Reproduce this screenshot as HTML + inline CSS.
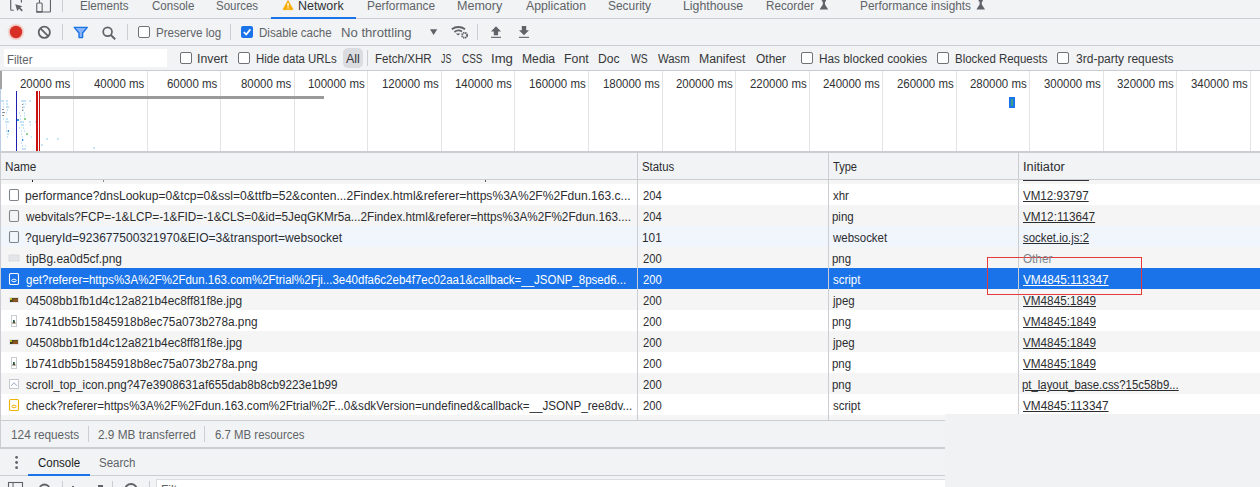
<!DOCTYPE html>
<html><head><meta charset="utf-8">
<style>
*{margin:0;padding:0;box-sizing:border-box}
html,body{width:1260px;height:487px;overflow:hidden;background:#f1f3f4;font-family:"Liberation Sans",sans-serif;font-size:12px;color:#202124;position:relative}
.a{position:absolute;white-space:nowrap;line-height:14px;transform-origin:0 0}
.hl{position:absolute;height:1px;background:#cacdd1}
.vl{position:absolute;width:1px;background:#cacdd1}
.cb{position:absolute;width:12px;height:12px;border:1px solid #6e7277;border-radius:2px;background:#fff}
.gl{position:absolute;top:71px;height:80px;width:1px;background:#e3e3e3}
.bg{position:absolute}
</style></head><body>

<!-- TAB BAR -->
<div class="hl" style="left:0;top:18px;width:1260px"></div>
<div class="bg" style="left:271px;top:17px;width:85px;height:2px;background:#1a73e8"></div>
<svg class="bg" style="left:0;top:0" width="1000" height="18">
 <!-- inspect icon -->
 <path d="M10.7 -1 V9.2 Q10.7 10.2 11.7 10.2 H13.8" fill="none" stroke="#5f6368" stroke-width="1.15"/>
 <path d="M21.4 -1 V2.6" fill="none" stroke="#5f6368" stroke-width="1.15"/>
 <path d="M15.2 4.3 L22.4 6.2 L20.2 7.6 L22.8 10.3 L21.7 11.4 L19.1 8.8 L17.3 11 Z" fill="#5f6368"/>
 <!-- device icon -->
 <rect x="36.75" y="2.95" width="5.4" height="9.1" rx="1" fill="none" stroke="#5f6368" stroke-width="1.1"/>
 <rect x="36.2" y="11.1" width="6.5" height="1.5" fill="#5f6368"/>
 <path d="M39.5 -1 V2.9" fill="none" stroke="#5f6368" stroke-width="1.1"/>
 <path d="M42.6 12.05 H49.9 Q50.45 12.05 50.45 11.5 V-1" fill="none" stroke="#5f6368" stroke-width="1.1"/>
 <rect x="62" y="0" width="1" height="12" fill="#cacdd1"/>
 <!-- warning -->
 <path d="M288 0.6 L293 9.6 H283 Z" fill="#f9ab00" stroke="#f9ab00" stroke-width="0.8" stroke-linejoin="round"/>
 <rect x="287.4" y="3" width="1.3" height="3.4" fill="#fff"/>
 <rect x="287.4" y="7.2" width="1.3" height="1.3" fill="#fff"/>
 <!-- flask icons -->
 <path d="M819.6 9.4 H828.2 L825 4.6 V1.6 H826 V0 H821.8 V1.6 H822.8 V4.6 Z" fill="#5f6368"/>
 <path d="M976.4 9.4 H985 L981.8 4.6 V1.6 H982.8 V0 H978.6 V1.6 H979.6 V4.6 Z" fill="#5f6368"/>
</svg>

<!-- TOOLBAR -->
<div class="hl" style="left:0;top:45px;width:1260px"></div>
<svg class="bg" style="left:0;top:19px" width="540" height="25" viewBox="0 19 540 25">
 <circle cx="16" cy="32" r="8.4" fill="#f3d6d3" opacity="0.75"/><circle cx="16" cy="32" r="7.4" fill="#f0c4bf" opacity="0.8"/>
 <circle cx="16" cy="32" r="6.2" fill="#d93025"/>
 <circle cx="44.3" cy="32.3" r="5.6" fill="none" stroke="#5f6368" stroke-width="1.8"/>
 <line x1="40.4" y1="28.4" x2="48.2" y2="36.2" stroke="#5f6368" stroke-width="1.8"/>
 <rect x="62" y="24" width="1" height="16" fill="#cacdd1"/>
 <path d="M74.3 27.4 H87.3 L82.6 33 V37.6 H79 V33 Z" fill="#8ab4f8" stroke="#1a73e8" stroke-width="1.4" stroke-linejoin="round"/>
 <circle cx="107.6" cy="31.8" r="4.4" fill="none" stroke="#5f6368" stroke-width="1.7"/>
 <line x1="110.8" y1="35" x2="115.2" y2="39.2" stroke="#5f6368" stroke-width="1.9"/>
 <rect x="127" y="24" width="1" height="16" fill="#cacdd1"/>
 <rect x="230" y="24" width="1" height="16" fill="#cacdd1"/>
 <path d="M430 29.2 H437.2 L433.6 35 Z" fill="#5f6368"/>
 <path d="M451.8 29.2 A11 11 0 0 1 465 29.2" fill="none" stroke="#5f6368" stroke-width="1.8"/>
 <path d="M454.4 32 A6.5 6.5 0 0 1 462 31.4" fill="none" stroke="#5f6368" stroke-width="1.8"/>
 <path d="M455.8 33.4 L458.2 35.6 L460.4 33.4 Z" fill="#5f6368"/>
 <circle cx="464.6" cy="35.3" r="2.5" fill="none" stroke="#5f6368" stroke-width="1.9" stroke-dasharray="1.4 0.6"/>
 <rect x="477" y="24" width="1" height="16" fill="#cacdd1"/>
 <path d="M496 26.3 L501 31.4 H498.1 V35.3 H493.8 V31.4 H491 Z" fill="#5f6368"/>
 <rect x="491" y="36.8" width="10" height="1.1" fill="#5f6368"/>
 <path d="M521.8 26 H526.2 V30.2 H529 L524 35.3 L519 30.2 H521.8 Z" fill="#5f6368"/>
 <rect x="519" y="36.8" width="10" height="1.1" fill="#5f6368"/>
 <rect x="241" y="26" width="12" height="12" rx="2" fill="#1a73e8"/>
 <path d="M243.8 32 L246.2 34.5 L250.4 29.4" fill="none" stroke="#fff" stroke-width="1.7"/>
</svg>
<div class="cb" style="left:138px;top:26px"></div>

<!-- FILTER BAR -->
<div class="bg" style="left:4px;top:49px;width:163px;height:18px;background:#fff"></div>
<div class="cb" style="left:180px;top:52px"></div>
<div class="cb" style="left:238px;top:52px"></div>
<div class="bg" style="left:343px;top:48px;width:20px;height:20px;border-radius:5px;background:#dadce0"></div>
<div class="vl" style="left:367px;top:50px;height:16px"></div>
<div class="cb" style="left:801px;top:52px"></div>
<div class="cb" style="left:937px;top:52px"></div>
<div class="cb" style="left:1057px;top:52px"></div>
<div class="hl" style="left:0;top:70px;width:1260px"></div>

<!-- TIMELINE -->
<div class="bg" style="left:0;top:71px;width:1260px;height:80px;background:#fff"></div>
<div class="gl" style="left:73px"></div><div class="gl" style="left:147px"></div><div class="gl" style="left:220px"></div><div class="gl" style="left:294px"></div><div class="gl" style="left:367px"></div><div class="gl" style="left:441px"></div><div class="gl" style="left:514px"></div><div class="gl" style="left:588px"></div><div class="gl" style="left:662px"></div><div class="gl" style="left:735px"></div><div class="gl" style="left:809px"></div><div class="gl" style="left:882px"></div><div class="gl" style="left:956px"></div><div class="gl" style="left:1029px"></div><div class="gl" style="left:1103px"></div><div class="gl" style="left:1176px"></div><div class="gl" style="left:1250px"></div>
<div class="bg" style="left:0;top:71px;width:2px;height:18px;background:#a3a3a3"></div>
<div class="bg" style="left:0;top:89px;width:1px;height:62px;background:#bccde8"></div>
<svg class="bg" style="left:0;top:71px" width="1260" height="80" viewBox="0 71 1260 80">
 <rect x="39" y="96" width="285" height="3" fill="#9a9a9a"/>
 <rect x="16" y="91" width="1" height="60" fill="#2020b0"/>
 <rect x="36" y="91" width="2" height="60" fill="#cc1111"/>
 <rect x="39" y="91" width="1" height="60" fill="#cc1111"/>
 <rect x="1009" y="97" width="6" height="11" fill="#1a73e8"/>
 <rect x="1011" y="99" width="2" height="7" fill="#3aa08a"/>
 <g fill="#a9d6f5" opacity="0.65">
  <rect x="1" y="100" width="3" height="2"/><rect x="6" y="100" width="2" height="2"/><rect x="21" y="100" width="5" height="2"/><rect x="29" y="100" width="2" height="2"/>
  <rect x="3" y="103" width="1" height="2"/><rect x="6" y="103" width="2" height="2"/><rect x="23" y="103" width="1" height="2"/><rect x="25" y="103" width="1" height="2"/>
  <rect x="3" y="106" width="1" height="2"/><rect x="6" y="106" width="3" height="2"/><rect x="23" y="106" width="2" height="2"/>
  <rect x="7" y="109" width="1" height="2"/><rect x="22" y="109" width="2" height="2"/>
  <rect x="6" y="112" width="1" height="2"/><rect x="19" y="112" width="1" height="2"/><rect x="24" y="112" width="1" height="2"/>
  <rect x="20" y="115" width="1" height="2"/><rect x="24" y="115" width="1" height="2"/>
  <rect x="3" y="118" width="1" height="2"/><rect x="6" y="118" width="2" height="2"/><rect x="20" y="118" width="1" height="2"/>
  <rect x="5" y="121" width="4" height="2"/><rect x="20" y="121" width="4" height="2"/><rect x="29" y="121" width="2" height="2"/><rect x="35" y="121" width="1" height="2"/>
  <rect x="6" y="124" width="1" height="2"/><rect x="21" y="124" width="3" height="2"/><rect x="30" y="124" width="1" height="2"/>
  <rect x="6" y="127" width="1" height="2"/><rect x="19" y="127" width="1" height="2"/><rect x="23" y="127" width="1" height="2"/>
  <rect x="6" y="130" width="2" height="2"/><rect x="21" y="130" width="1" height="2"/><rect x="24" y="130" width="1" height="2"/>
  <rect x="7" y="133" width="2" height="2"/><rect x="21" y="133" width="1" height="2"/>
  <rect x="7" y="136" width="1" height="2"/><rect x="22" y="136" width="1" height="2"/><rect x="31" y="136" width="1" height="2"/>
  <rect x="22" y="139" width="2" height="2"/><rect x="46" y="138" width="2" height="2"/><rect x="57" y="138" width="2" height="2"/>
  <rect x="21" y="142" width="1" height="2"/><rect x="22" y="145" width="1" height="2"/><rect x="25" y="145" width="1" height="2"/><rect x="41" y="144" width="2" height="2"/>
  <rect x="22" y="148" width="4" height="2"/><rect x="93" y="147" width="2" height="2"/>
 </g>
 <g fill="#8a8a8a">
  <rect x="2" y="109" width="2" height="1"/><rect x="2" y="112" width="3" height="1"/><rect x="2" y="115" width="2" height="1"/>
  <rect x="22" y="104" width="1" height="1"/><rect x="22" y="107" width="1" height="1"/><rect x="22" y="110" width="1" height="1"/>
 </g>
 <g fill="#3b8fe0"><rect x="17" y="119" width="2" height="2"/><rect x="8" y="130" width="1" height="2"/><rect x="22" y="139" width="1" height="2"/></g>
 <g fill="#8fd08f"><rect x="24" y="118" width="2" height="2"/><rect x="26" y="133" width="2" height="2"/></g>
</svg>
<div class="bg" style="left:0;top:151px;width:1260px;height:2px;background:#cacdd1"></div>

<!-- TABLE -->
<div class="bg" style="left:0;top:153px;width:1260px;height:26px;background:#f1f3f4"></div>
<div class="hl" style="left:0;top:179px;width:1260px"></div>
<div class="bg" style="left:0;top:180px;width:1260px;height:240px;background:#fff"></div>
<div class="bg" style="left:0;top:180px;width:1260px;height:4px;background:#f5f5f5"></div>
<div class="bg" style="left:0;top:205px;width:1260px;height:21px;background:#f5f5f5"></div>
<div class="bg" style="left:0;top:226px;width:1260px;height:21px;background:#f1f5fc"></div>
<div class="bg" style="left:0;top:247px;width:1260px;height:21px;background:#f5f5f5"></div>
<div class="bg" style="left:0;top:289px;width:1260px;height:21px;background:#f5f5f5"></div>
<div class="bg" style="left:0;top:331px;width:1260px;height:21px;background:#f5f5f5"></div>
<div class="bg" style="left:0;top:373px;width:1260px;height:21px;background:#f5f5f5"></div>
<div class="bg" style="left:0;top:415px;width:1260px;height:5px;background:#f5f5f5"></div>
<div class="bg" style="left:0;top:268px;width:1260px;height:21px;background:#1a73e8"></div>
<div class="vl" style="left:637px;top:153px;height:267px"></div>
<div class="vl" style="left:828px;top:153px;height:267px"></div>
<div class="vl" style="left:1018px;top:153px;height:267px"></div>
<div class="bg" style="left:0;top:153px;width:1px;height:295px;background:#cacdd1"></div>
<!-- partial row artifacts -->
<div class="bg" style="left:32px;top:180px;width:1px;height:2px;background:#202124"></div>
<div class="bg" style="left:103px;top:180px;width:1px;height:2px;background:#888"></div>
<div class="bg" style="left:485px;top:180px;width:1px;height:2px;background:#555"></div>
<div class="bg" style="left:1023px;top:180px;width:66px;height:1px;background:#303134"></div>
<!-- row icons -->
<svg class="bg" style="left:0;top:180px" width="24" height="240" viewBox="0 180 24 240">
 <g fill="none" stroke="#80868b" stroke-width="1.1">
  <rect x="9.5" y="189.5" width="9" height="11" rx="1.2"/>
  <rect x="9.5" y="210.5" width="9" height="11" rx="1.2"/>
  <rect x="9.5" y="231.5" width="9" height="11" rx="1.2"/>
 </g>
 <rect x="9" y="255" width="10" height="6" fill="#e3e5e8" stroke="#d5d8dc" stroke-width="0.8"/>
 <rect x="9.5" y="273.5" width="9" height="11" rx="1.2" fill="none" stroke="#fff" stroke-width="1.1"/>
 <ellipse cx="14" cy="280.5" rx="2.2" ry="1.3" fill="none" stroke="#fff" stroke-width="1"/>
 <rect x="9.5" y="297.5" width="9" height="5" fill="#33461f" stroke="#dfe2e6" stroke-width="1"/>
 <rect x="10" y="298" width="2" height="2" fill="#c2b82a"/>
 <rect x="13" y="298.5" width="5" height="3.5" fill="#8a5220"/>
 <rect x="12" y="300" width="1" height="2" fill="#6a4a1a"/>
 <rect x="9.5" y="339.5" width="9" height="5" fill="#33461f" stroke="#dfe2e6" stroke-width="1"/>
 <rect x="10" y="340" width="2" height="2" fill="#c2b82a"/>
 <rect x="13" y="340.5" width="5" height="3.5" fill="#8a5220"/>
 <rect x="12" y="342" width="1" height="2" fill="#6a4a1a"/>
 <rect x="11.5" y="315.5" width="5" height="11" fill="#fff" stroke="#c8ccd3" stroke-width="1"/>
 <path d="M12.2 323.5 L13.8 320 L15.8 323.5 Z" fill="#6a4a2a"/><rect x="13" y="320" width="1.6" height="2.6" fill="#1f5a45"/>
 <rect x="11.5" y="357.5" width="5" height="11" fill="#fff" stroke="#c8ccd3" stroke-width="1"/>
 <path d="M12.2 365.5 L13.8 362 L15.8 365.5 Z" fill="#6a4a2a"/><rect x="13" y="362" width="1.6" height="2.6" fill="#1f5a45"/>
 <rect x="9.5" y="379.5" width="9" height="9" fill="#fff" stroke="#c4c8d0" stroke-width="1"/>
 <path d="M11.2 385.8 L14 382.6 L16.8 385.8" fill="none" stroke="#9aa8cc" stroke-width="1"/>
 <rect x="9.5" y="399.5" width="9" height="11" rx="1.2" fill="none" stroke="#f0b000" stroke-width="1.1"/>
 <ellipse cx="14" cy="406.5" rx="2.2" ry="1.3" fill="none" stroke="#f0b000" stroke-width="1"/>
</svg>
<!-- red annotation box -->
<div class="bg" style="left:987px;top:257px;width:155px;height:38px;border:1px solid #e5393b"></div>

<!-- STATUS BAR -->
<div class="hl" style="left:0;top:420px;width:1260px"></div>
<div class="bg" style="left:0;top:447px;width:1260px;height:2px;background:#cacdd1"></div>
<div class="vl" style="left:88px;top:426px;height:16px"></div>
<div class="vl" style="left:204px;top:426px;height:16px"></div>

<!-- DRAWER -->
<svg class="bg" style="left:0;top:449px" width="200" height="38" viewBox="0 449 200 38">
 <circle cx="16.6" cy="457.3" r="1.4" fill="#5f6368"/>
 <circle cx="16.6" cy="462.5" r="1.4" fill="#5f6368"/>
 <circle cx="16.6" cy="467.7" r="1.4" fill="#5f6368"/>
 <rect x="8.5" y="482.5" width="14" height="10" fill="none" stroke="#5f6368" stroke-width="1.1"/>
 <rect x="12.5" y="482.5" width="1" height="10" fill="#5f6368"/>
 <circle cx="44.5" cy="489.5" r="5" fill="none" stroke="#5f6368" stroke-width="1.8"/>
 <rect x="62" y="481" width="1" height="10" fill="#cacdd1"/>
 <rect x="72" y="486" width="2" height="2" fill="#5f6368"/>
 <rect x="98" y="485" width="5" height="2" fill="#5f6368"/>
 <rect x="112" y="481" width="1" height="10" fill="#cacdd1"/>
 <circle cx="131" cy="490" r="6" fill="none" stroke="#5f6368" stroke-width="1.8"/>
 <rect x="149" y="481" width="1" height="10" fill="#cacdd1"/>
</svg>
<div class="hl" style="left:0;top:475px;width:1260px"></div>
<div class="bg" style="left:28px;top:474px;width:62px;height:2px;background:#1a73e8"></div>
<div class="bg" style="left:156px;top:479px;width:800px;height:10px;background:#fff;border:1px solid #dadce0"></div>
<div class="a" style="left:161px;top:483px;color:#5f6368">Filter</div>

<div class="a" style="left:79.73px;top:-1px;color:#5f6368;transform:scaleX(0.9714);">Elements</div>
<div class="a" style="left:151.70px;top:-1px;color:#5f6368;transform:scaleX(0.9614);">Console</div>
<div class="a" style="left:216.44px;top:-1px;color:#5f6368;transform:scaleX(0.9550);">Sources</div>
<div class="a" style="left:366.81px;top:-1px;color:#5f6368;transform:scaleX(0.9910);">Performance</div>
<div class="a" style="left:456.75px;top:-1px;color:#5f6368;transform:scaleX(1.0452);">Memory</div>
<div class="a" style="left:526.00px;top:-1px;color:#5f6368;transform:scaleX(1.0224);">Application</div>
<div class="a" style="left:608.31px;top:-1px;color:#5f6368;transform:scaleX(0.9929);">Security</div>
<div class="a" style="left:683.28px;top:-1px;color:#5f6368;transform:scaleX(1.0246);">Lighthouse</div>
<div class="a" style="left:766.23px;top:-1px;color:#5f6368;transform:scaleX(0.9729);">Recorder</div>
<div class="a" style="left:859.92px;top:-1px;color:#5f6368;transform:scaleX(0.9848);">Performance insights</div>
<div class="a" style="left:297.96px;top:-1px;color:#303134;transform:scaleX(1.0372);">Network</div>
<div class="a" style="left:155.73px;top:26px;color:#5f6368;transform:scaleX(0.9667);">Preserve log</div>
<div class="a" style="left:258.64px;top:26px;color:#5f6368;transform:scaleX(0.9649);">Disable cache</div>
<div class="a" style="left:341.41px;top:26px;color:#5f6368;transform:scaleX(1.0921);">No throttling</div>
<div class="a" style="left:6.64px;top:53px;color:#5f6368;transform:scaleX(0.9550);">Filter</div>
<div class="a" style="left:197.28px;top:52px;color:#36373a;transform:scaleX(1.0241);">Invert</div>
<div class="a" style="left:255.75px;top:52px;color:#36373a;transform:scaleX(0.9524);">Hide data URLs</div>
<div class="a" style="left:346.00px;top:52px;color:#36373a;transform:scaleX(1.0385);">All</div>
<div class="a" style="left:374.53px;top:52px;color:#36373a;transform:scaleX(0.9667);">Fetch/XHR</div>
<div class="a" style="left:440.50px;top:52px;color:#36373a;transform:scaleX(0.7357);">JS</div>
<div class="a" style="left:461.50px;top:52px;color:#36373a;transform:scaleX(0.8250);">CSS</div>
<div class="a" style="left:490.91px;top:52px;color:#36373a;transform:scaleX(1.0944);">Img</div>
<div class="a" style="left:521.59px;top:52px;color:#36373a;transform:scaleX(1.0125);">Media</div>
<div class="a" style="left:564.27px;top:52px;color:#36373a;transform:scaleX(1.0304);">Font</div>
<div class="a" style="left:598.39px;top:52px;color:#36373a;transform:scaleX(1.0100);">Doc</div>
<div class="a" style="left:630.50px;top:52px;color:#36373a;transform:scaleX(0.8684);">WS</div>
<div class="a" style="left:658.20px;top:52px;color:#36373a;transform:scaleX(0.9455);">Wasm</div>
<div class="a" style="left:699.48px;top:52px;color:#36373a;transform:scaleX(1.0227);">Manifest</div>
<div class="a" style="left:755.80px;top:52px;color:#36373a;transform:scaleX(0.9967);">Other</div>
<div class="a" style="left:818.82px;top:52px;color:#36373a;transform:scaleX(0.9826);">Has blocked cookies</div>
<div class="a" style="left:954.54px;top:52px;color:#36373a;transform:scaleX(0.9552);">Blocked Requests</div>
<div class="a" style="left:1076.10px;top:52px;color:#36373a;">3rd-party requests</div>
<div class="a" style="left:19.89px;top:77px;color:#303134;transform:scaleX(0.9550);">20000 ms</div>
<div class="a" style="left:93.89px;top:77px;color:#303134;transform:scaleX(0.9550);">40000 ms</div>
<div class="a" style="left:166.88px;top:77px;color:#303134;transform:scaleX(0.9550);">60000 ms</div>
<div class="a" style="left:240.88px;top:77px;color:#303134;transform:scaleX(0.9550);">80000 ms</div>
<div class="a" style="left:308.15px;top:77px;color:#303134;transform:scaleX(0.9550);">100000 ms</div>
<div class="a" style="left:382.15px;top:77px;color:#303134;transform:scaleX(0.9550);">120000 ms</div>
<div class="a" style="left:455.15px;top:77px;color:#303134;transform:scaleX(0.9550);">140000 ms</div>
<div class="a" style="left:529.15px;top:77px;color:#303134;transform:scaleX(0.9550);">160000 ms</div>
<div class="a" style="left:603.15px;top:77px;color:#303134;transform:scaleX(0.9550);">180000 ms</div>
<div class="a" style="left:676.15px;top:77px;color:#303134;transform:scaleX(0.9550);">200000 ms</div>
<div class="a" style="left:750.15px;top:77px;color:#303134;transform:scaleX(0.9550);">220000 ms</div>
<div class="a" style="left:823.15px;top:77px;color:#303134;transform:scaleX(0.9550);">240000 ms</div>
<div class="a" style="left:897.15px;top:77px;color:#303134;transform:scaleX(0.9550);">260000 ms</div>
<div class="a" style="left:970.15px;top:77px;color:#303134;transform:scaleX(0.9550);">280000 ms</div>
<div class="a" style="left:1044.15px;top:77px;color:#303134;transform:scaleX(0.9550);">300000 ms</div>
<div class="a" style="left:1117.15px;top:77px;color:#303134;transform:scaleX(0.9550);">320000 ms</div>
<div class="a" style="left:1191.15px;top:77px;color:#303134;transform:scaleX(0.9550);">340000 ms</div>
<div class="a" style="left:4.72px;top:160px;color:#2c2d30;transform:scaleX(0.9774);">Name</div>
<div class="a" style="left:641.75px;top:160px;color:#2c2d30;transform:scaleX(0.9485);">Status</div>
<div class="a" style="left:833.00px;top:160px;color:#2c2d30;transform:scaleX(0.9231);">Type</div>
<div class="a" style="left:1022.54px;top:160px;color:#2c2d30;transform:scaleX(1.0632);">Initiator</div>
<div class="a" style="left:10.52px;top:428px;color:#5f6368;transform:scaleX(0.9838);">124 requests</div>
<div class="a" style="left:97.60px;top:428px;color:#5f6368;transform:scaleX(0.9838);">2.9 MB transferred</div>
<div class="a" style="left:214.60px;top:428px;color:#5f6368;transform:scaleX(0.9511);">6.7 MB resources</div>
<div class="a" style="left:37.70px;top:456px;color:#202124;transform:scaleX(0.9591);">Console</div>
<div class="a" style="left:98.84px;top:456px;color:#5f6368;transform:scaleX(0.9583);">Search</div>
<div class="a" style="left:25.19px;top:189px;color:#2c2d30;transform:scaleX(1.0060);">performance?dnsLookup=0&amp;tcp=0&amp;ssl=0&amp;ttfb=52&amp;conten...2Findex.html&amp;referer=https%3A%2F%2Fdun.163.c...</div>
<div class="a" style="left:642.70px;top:189px;color:#2c2d30;transform:scaleX(0.9350);">204</div>
<div class="a" style="left:833.00px;top:189px;color:#2c2d30;transform:scaleX(0.9550);">xhr</div>
<div class="a" style="left:1023.30px;top:189px;color:#2c2d30;transform:scaleX(0.9647);text-decoration:underline;">VM12:93797</div>
<div class="a" style="left:26.20px;top:210px;color:#2c2d30;transform:scaleX(0.9786);">webvitals?FCP=-1&amp;LCP=-1&amp;FID=-1&amp;CLS=0&amp;id=5JeqGKMr5a...2Findex.html&amp;referer=https%3A%2F%2Fdun.163....</div>
<div class="a" style="left:642.70px;top:210px;color:#2c2d30;transform:scaleX(0.9350);">204</div>
<div class="a" style="left:832.04px;top:210px;color:#2c2d30;transform:scaleX(0.9550);">ping</div>
<div class="a" style="left:1023.30px;top:210px;color:#2c2d30;transform:scaleX(0.9770);text-decoration:underline;">VM12:113647</div>
<div class="a" style="left:25.19px;top:231px;color:#2c2d30;transform:scaleX(1.0057);">?queryId=923677500321970&amp;EIO=3&amp;transport=websocket</div>
<div class="a" style="left:641.72px;top:231px;color:#2c2d30;transform:scaleX(0.9842);">101</div>
<div class="a" style="left:833.00px;top:231px;color:#2c2d30;transform:scaleX(0.9550);">websocket</div>
<div class="a" style="left:1023.30px;top:231px;color:#2c2d30;transform:scaleX(0.9522);text-decoration:underline;">socket.io.js:2</div>
<div class="a" style="left:26.20px;top:252px;color:#2c2d30;transform:scaleX(0.9917);">tipBg.ea0d5cf.png</div>
<div class="a" style="left:642.70px;top:252px;color:#2c2d30;transform:scaleX(0.9350);">200</div>
<div class="a" style="left:832.04px;top:252px;color:#2c2d30;transform:scaleX(0.9550);">png</div>
<div class="a" style="left:1023.30px;top:252px;color:#80868b;transform:scaleX(0.9767);">Other</div>
<div class="a" style="left:26.20px;top:273px;color:#fff;transform:scaleX(0.9581);">get?referer=https%3A%2F%2Fdun.163.com%2Ftrial%2Fji...3e40dfa6c2eb4f7ec02aa1&amp;callback=__JSONP_8psed6...</div>
<div class="a" style="left:642.70px;top:273px;color:#fff;transform:scaleX(0.9350);">200</div>
<div class="a" style="left:833.00px;top:273px;color:#fff;transform:scaleX(0.9550);">script</div>
<div class="a" style="left:1023.30px;top:273px;color:#fff;transform:scaleX(0.9816);text-decoration:underline;">VM4845:113347</div>
<div class="a" style="left:26.20px;top:294px;color:#2c2d30;transform:scaleX(0.9917);">04508bb1fb1d4c12a821b4ec8ff81f8e.jpg</div>
<div class="a" style="left:642.70px;top:294px;color:#2c2d30;transform:scaleX(0.9350);">200</div>
<div class="a" style="left:833.00px;top:294px;color:#2c2d30;transform:scaleX(0.9550);">jpeg</div>
<div class="a" style="left:1023.30px;top:294px;color:#2c2d30;transform:scaleX(0.9770);text-decoration:underline;">VM4845:1849</div>
<div class="a" style="left:25.22px;top:315px;color:#2c2d30;transform:scaleX(0.9843);">1b741db5b15845918b8ec75a073b278a.png</div>
<div class="a" style="left:642.70px;top:315px;color:#2c2d30;transform:scaleX(0.9350);">200</div>
<div class="a" style="left:832.04px;top:315px;color:#2c2d30;transform:scaleX(0.9550);">png</div>
<div class="a" style="left:1023.30px;top:315px;color:#2c2d30;transform:scaleX(0.9770);text-decoration:underline;">VM4845:1849</div>
<div class="a" style="left:26.20px;top:336px;color:#2c2d30;transform:scaleX(0.9917);">04508bb1fb1d4c12a821b4ec8ff81f8e.jpg</div>
<div class="a" style="left:642.70px;top:336px;color:#2c2d30;transform:scaleX(0.9350);">200</div>
<div class="a" style="left:833.00px;top:336px;color:#2c2d30;transform:scaleX(0.9550);">jpeg</div>
<div class="a" style="left:1023.30px;top:336px;color:#2c2d30;transform:scaleX(0.9770);text-decoration:underline;">VM4845:1849</div>
<div class="a" style="left:25.22px;top:357px;color:#2c2d30;transform:scaleX(0.9843);">1b741db5b15845918b8ec75a073b278a.png</div>
<div class="a" style="left:642.70px;top:357px;color:#2c2d30;transform:scaleX(0.9350);">200</div>
<div class="a" style="left:832.04px;top:357px;color:#2c2d30;transform:scaleX(0.9550);">png</div>
<div class="a" style="left:1023.30px;top:357px;color:#2c2d30;transform:scaleX(0.9770);text-decoration:underline;">VM4845:1849</div>
<div class="a" style="left:26.20px;top:378px;color:#2c2d30;transform:scaleX(0.9749);">scroll_top_icon.png?47e3908631af655dab8b8cb9223e1b99</div>
<div class="a" style="left:642.70px;top:378px;color:#2c2d30;transform:scaleX(0.9350);">200</div>
<div class="a" style="left:832.04px;top:378px;color:#2c2d30;transform:scaleX(0.9550);">png</div>
<div class="a" style="left:1022.35px;top:378px;color:#2c2d30;transform:scaleX(0.9470);text-decoration:underline;">pt_layout_base.css?15c58b9...</div>
<div class="a" style="left:26.20px;top:399px;color:#2c2d30;transform:scaleX(0.9696);">check?referer=https%3A%2F%2Fdun.163.com%2Ftrial%2F...0&amp;sdkVersion=undefined&amp;callback=__JSONP_ree8dv...</div>
<div class="a" style="left:642.70px;top:399px;color:#2c2d30;transform:scaleX(0.9350);">200</div>
<div class="a" style="left:833.00px;top:399px;color:#2c2d30;transform:scaleX(0.9550);">script</div>
<div class="a" style="left:1023.30px;top:399px;color:#2c2d30;transform:scaleX(0.9816);text-decoration:underline;">VM4845:113347</div>

<!-- bottom-right overlay -->
<div class="bg" style="left:945px;top:414px;width:315px;height:73px;background:#f1f2f4"></div>
</body></html>
